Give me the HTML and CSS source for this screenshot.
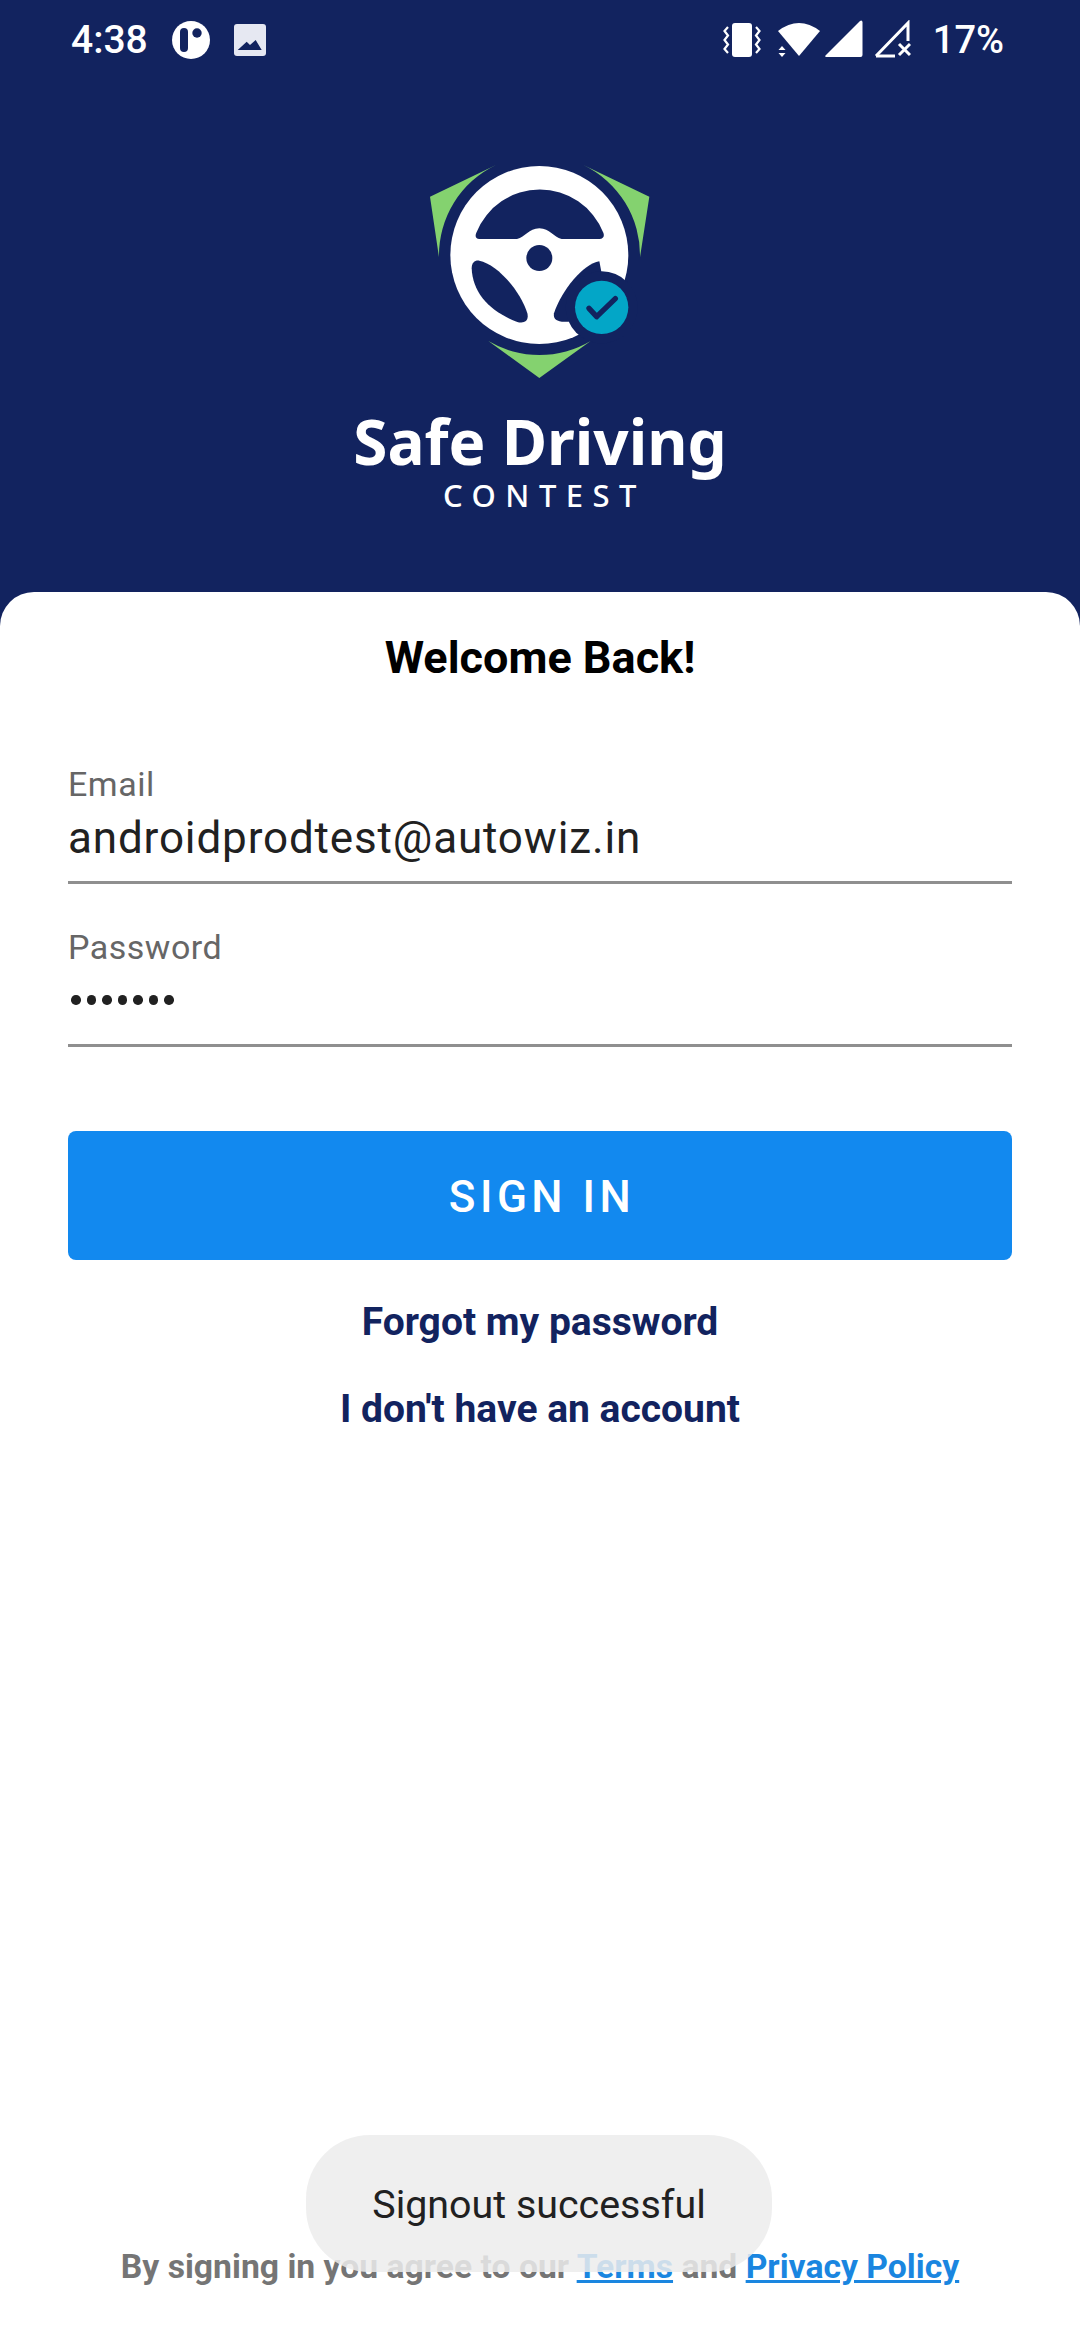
FILE: index.html
```html
<!DOCTYPE html>
<html lang="en">
<head>
<meta charset="utf-8">
<title>Safe Driving Contest</title>
<link rel="stylesheet" href="styles.css">
</head>
<body>
<div class="screen">
  <header class="hero">
    <div class="status">
      <div class="status-left">
        <span class="time">4:38</span>
        <svg class="ic-app" viewBox="0 0 38 38"><circle cx="19" cy="19" r="19" fill="#fff"/><rect x="8" y="7" width="8" height="24" rx="4" fill="#12235f"/><circle cx="25" cy="12" r="4.7" fill="#12235f"/></svg>
        <svg class="ic-img" viewBox="0 0 32 32"><rect width="32" height="32" rx="3" fill="#e6e8f2"/><path d="M3.700 26L12.700 17.700L16 21L21.700 16L27.700 26z" fill="#12235f"/></svg>
      </div>
      <div class="status-right">
        <svg class="ic-vib" viewBox="0 0 38 36"><rect x="9" y="1" width="20" height="34" rx="3" fill="#fff"/><path d="M5 5L1.500 9L5 13.500L1.500 18L5 22.500L1.500 27L5 31M33 5L36.500 9L33 13.500L36.500 18L33 22.500L36.500 27L33 31" fill="none" stroke="#fff" stroke-width="2.200"/></svg>
        <svg class="ic-wifi" viewBox="0 0 42 36"><path d="M0 9Q21-7 42 9L21 34z" fill="#fff"/><path d="M0.500 28L4 24L7.500 28zM0.500 31L4 35L7.500 31z" fill="#fff"/></svg>
        <svg class="ic-sig" viewBox="0 0 38 40"><path d="M1 37a1 1 0 0 1-.500-1.500L35 1q2-1.500 2.500 1v33q0 2-2 2z" fill="#fff"/></svg>
        <svg class="ic-sig2" viewBox="0 0 38 40"><path d="M3 36L35 3V21" fill="none" stroke="#fff" stroke-width="3"/><path d="M3 36H22" fill="none" stroke="#fff" stroke-width="3"/><path d="M26 24L37 35M37 24L26 35" stroke="#fff" stroke-width="3"/></svg>
        <span class="pct">17%</span>
      </div>
    </div>
    <div class="logo">
      <svg class="mark" viewBox="300 60 720 672">
        <g fill="#84d26f">
          <path d="M330 170L528 75A300 300 0 0 0 357 352z"/>
          <path d="M988 170L790 75A300 300 0 0 1 960 352z"/>
          <path d="M505 603A300 300 0 0 0 812 603L658 714z"/>
        </g>
        <circle cx="658" cy="345" r="267" fill="#fff"/>
        <g fill="#12235f">
          <path d="M478 297Q462 295 469 278A205 205 0 0 1 850 278Q856 295 838 297H725C700 292 690 265 658 265C626 265 616 292 591 297z"/>
          <circle cx="658" cy="354" r="39"/>
          <path d="M478 362C530 372 600 450 622 520C628 545 610 552 590 545C510 515 458 460 455 385C455 368 465 360 478 362z"/>
          <path d="M838 364C790 372 725 450 702 520C698 540 715 548 745 545L860 480z"/>
          <circle cx="845" cy="502" r="108"/>
        </g>
        <circle cx="845" cy="502" r="80" fill="#03a6c7"/>
        <path d="M807 505L830 530L886 476" fill="none" stroke="#12235f" stroke-width="16" stroke-linecap="round" stroke-linejoin="round"/>
      </svg>
      <div class="brand">Safe Driving</div>
      <div class="sub">CONTEST</div>
    </div>
  </header>
  <main class="card">
    <h1 class="title">Welcome Back!</h1>
    <div class="field">
      <div class="label">Email</div>
      <div class="value">androidprodtest@autowiz.in</div>
    </div>
    <div class="field">
      <div class="label">Password</div>
      <div class="value dots"><i></i><i></i><i></i><i></i><i></i><i></i><i></i></div>
    </div>
    <div class="btn">SIGN IN</div>
    <div class="link">Forgot my password</div>
    <div class="link">I don't have an account</div>
    <div class="legal">By signing in you agree to our <u>Terms</u> and <u>Privacy Policy</u></div>
    <div class="toast">Signout successful</div>
  </main>
</div>
</body>
</html>
```
FILE: styles.css
```css
* { box-sizing: border-box; }
html, body { margin: 0; padding: 0; }
body { width: 1080px; height: 2340px; background: #12235f; font-family: Roboto, sans-serif; overflow: hidden; }
.screen { display: flex; flex-direction: column; height: 2340px; }
.hero { height: 592px; background: #12235f; display: flex; flex-direction: column; }
.status { height: 80px; padding: 0 76px 0 71px; display: flex; justify-content: space-between; align-items: center; color: #fff; }
.status-left, .status-right { display: flex; align-items: center; }
.time { font-size: 39px; font-weight: 500; }
.ic-app { width: 38px; height: 38px; margin-left: 24px; }
.ic-img { width: 32px; height: 32px; margin-left: 24px; }
.ic-vib { width: 38px; height: 36px; }
.ic-wifi { width: 42px; height: 36px; margin-left: 17px; }
.ic-sig { width: 38px; height: 40px; margin-left: 5px; }
.ic-sig2 { width: 38px; height: 40px; margin-left: 10px; }
.pct { font-size: 38px; font-weight: 500; margin-left: 22px; }
.logo { display: flex; flex-direction: column; align-items: center; color: #fff; }
.mark { width: 240px; height: 224px; margin-top: 80px; flex: none; }
.brand { font-family: "Noto Sans", sans-serif; font-weight: 700; font-size: 62px; line-height: 60px; margin-top: 27px; }
.sub { font-family: "Noto Sans", sans-serif; font-weight: 500; font-size: 31px; letter-spacing: 9.500px; line-height: 36px; margin-top: 6px; padding-left: 9px; }
.card { position: relative; flex: 1; background: #fff; border-radius: 34px 34px 0 0; padding: 41px 68px 0; display: flex; flex-direction: column; }
.title { margin: 0; font-size: 45px; font-weight: 700; line-height: 50px; text-align: center; color: #000; }
.field { border-bottom: 3px solid #8f8f8f; height: 120px; margin-top: 81px; display: flex; flex-direction: column; }
.field + .field { margin-top: 43px; }
.label { font-size: 34px; letter-spacing: .5px; line-height: 40px; color: #666; }
.value { font-size: 44px; letter-spacing: .85px; line-height: 64px; color: #212121; margin-top: -1px; transform: translateY(3px); }
.dots { display: flex; gap: 6px; align-items: center; height: 64px; padding-left: 3px; margin-top: 1px; transform: none; }
.dots i { width: 9.500px; height: 9.500px; border-radius: 50%; background: #212121; }
.btn { margin-top: 84px; height: 129px; flex: none; background: #1289ef; border-radius: 8px; color: #fff; font-size: 44px; font-weight: 500; letter-spacing: 4.500px; padding: 2px 0 0 4px; display: flex; align-items: center; justify-content: center; }
.link { text-align: center; color: #12235f; font-size: 39px; font-weight: 700; line-height: 50px; margin-top: 37px; }
.legal { position: absolute; left: 0; right: 0; top: 1653px; text-align: center; font-size: 33.700px; font-weight: 700; color: #757575; line-height: 44px; }
.legal u { color: #1a86e0; }
.toast { position: absolute; left: 306px; top: 1543px; width: 466px; height: 137px; padding-top: 2px; border-radius: 64px; background: rgba(236,236,236,.85); color: #212121; font-size: 39.400px; display: flex; align-items: center; justify-content: center; }
```
